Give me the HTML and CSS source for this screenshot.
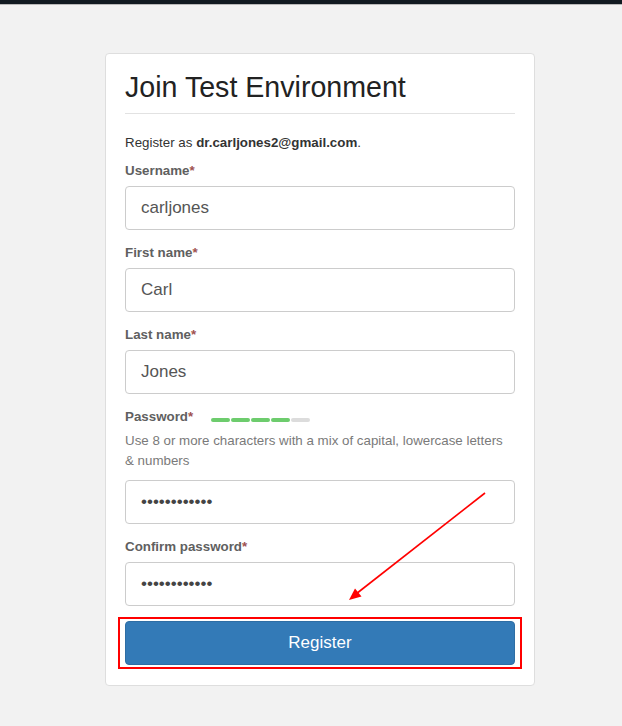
FILE: index.html
```html
<!DOCTYPE html>
<html lang="en">
<head>
<meta charset="utf-8">
<title>Join Test Environment</title>
<link rel="stylesheet" href="styles.css">
</head>
<body>
<div class="topbar"></div>
<main class="page">
  <form class="card">
    <h1 class="title">Join Test Environment</h1>
    <hr class="rule">
    <p class="intro">Register as <strong>dr.carljones2@gmail.com</strong>.</p>

    <div class="field">
      <label class="label">Username<span class="req">*</span></label>
      <input class="input" type="text" value="carljones">
    </div>

    <div class="field">
      <label class="label">First name<span class="req">*</span></label>
      <input class="input" type="text" value="Carl">
    </div>

    <div class="field">
      <label class="label">Last name<span class="req">*</span></label>
      <input class="input" type="text" value="Jones">
    </div>

    <div class="field">
      <div class="label-row">
        <label class="label">Password<span class="req">*</span></label>
        <div class="meter">
          <span class="seg on"></span><span class="seg on"></span><span class="seg on"></span><span class="seg on"></span><span class="seg"></span>
        </div>
      </div>
      <p class="help">Use 8 or more characters with a mix of capital, lowercase letters<br>&amp; numbers</p>
      <input class="input pw" type="password" value="abcdefghijkl">
    </div>

    <div class="field">
      <label class="label">Confirm password<span class="req">*</span></label>
      <input class="input pw" type="password" value="abcdefghijkl">
    </div>

    <div class="submit">
      <button class="btn" type="button">Register</button>
      <span class="highlight"></span>
    </div>
  </form>
</main>
<svg class="annotation" width="622" height="726" viewBox="0 0 622 726" xmlns="http://www.w3.org/2000/svg">
  <line x1="485" y1="493" x2="356" y2="594" stroke="#ff0000" stroke-width="1.6"/>
  <polygon points="349,600 361.5,596.5 355,588.5" fill="#ff0000"/>
</svg>
</body>
</html>
```

FILE: styles.css
```css
* { box-sizing: border-box; }

html, body {
  margin: 0;
  padding: 0;
}

body {
  background: #f2f2f2;
  font-family: "Liberation Sans", Arial, sans-serif;
  color: #333;
  min-height: 726px;
  position: relative;
}

.topbar {
  height: 5px;
  background: #111a21;
  border-bottom: 1px solid #b9b9b9;
}

.page {
  padding: 47px 0 0 105px;
}

.card {
  width: 430px;
  background: #fff;
  border: 1px solid #dedede;
  border-radius: 4px;
  padding: 18px 19px 20px 19px;
  margin-top: 1px;
}

.title {
  margin: 0;
  font-size: 28.6px;
  line-height: 31px;
  font-weight: normal;
  color: #222;
}

.rule {
  margin: 10px 0 0 0;
  border: 0;
  border-top: 1px solid #e2e2e2;
  height: 0;
}

.intro {
  margin: 19px 0 0 0;
  font-size: 13.33px;
  line-height: 20px;
  color: #333;
}

.intro strong { color: #333; }

.field {
  margin-top: 8px;
  display: flex;
  flex-direction: column;
}

.field + .field { margin-top: 13px; }

.label {
  display: block;
  font-size: 13.33px;
  line-height: 20px;
  font-weight: bold;
  color: #606060;
  margin-bottom: 5px;
}

.req { color: #a0524f; }

.label-row {
  display: flex;
  align-items: center;
}

.label-row .label { margin-bottom: 0; }

.meter {
  display: flex;
  gap: 1px;
  margin-left: 18px;
  margin-top: 6px;
}

.seg {
  width: 19px;
  height: 4px;
  border-radius: 2px;
  background: #dcdcdc;
}

.seg.on { background: #6dcc6d; }

.help {
  margin: 4px 0 9px 0;
  font-size: 13.33px;
  line-height: 20px;
  color: #7a7a7a;
}

.input {
  display: block;
  width: 100%;
  height: 44px;
  border: 1px solid #cccccc;
  border-radius: 4px;
  padding: 0 15px;
  font-family: "Liberation Sans", Arial, sans-serif;
  font-size: 17px;
  color: #555;
  background: #fff;
  outline: none;
}

.input.pw { color: #444; }

.submit {
  position: relative;
  margin-top: 15px;
}

.btn {
  display: block;
  width: 100%;
  height: 44px;
  border: 1px solid #2e6da4;
  border-radius: 4px;
  background: #337ab7;
  color: #fff;
  font-family: "Liberation Sans", Arial, sans-serif;
  font-size: 17px;
}

.highlight {
  position: absolute;
  left: -7px;
  right: -7px;
  top: -4px;
  bottom: -4px;
  border: 2px solid #ff0000;
  pointer-events: none;
}

.annotation {
  position: absolute;
  left: 0;
  top: 0;
  pointer-events: none;
}
```
